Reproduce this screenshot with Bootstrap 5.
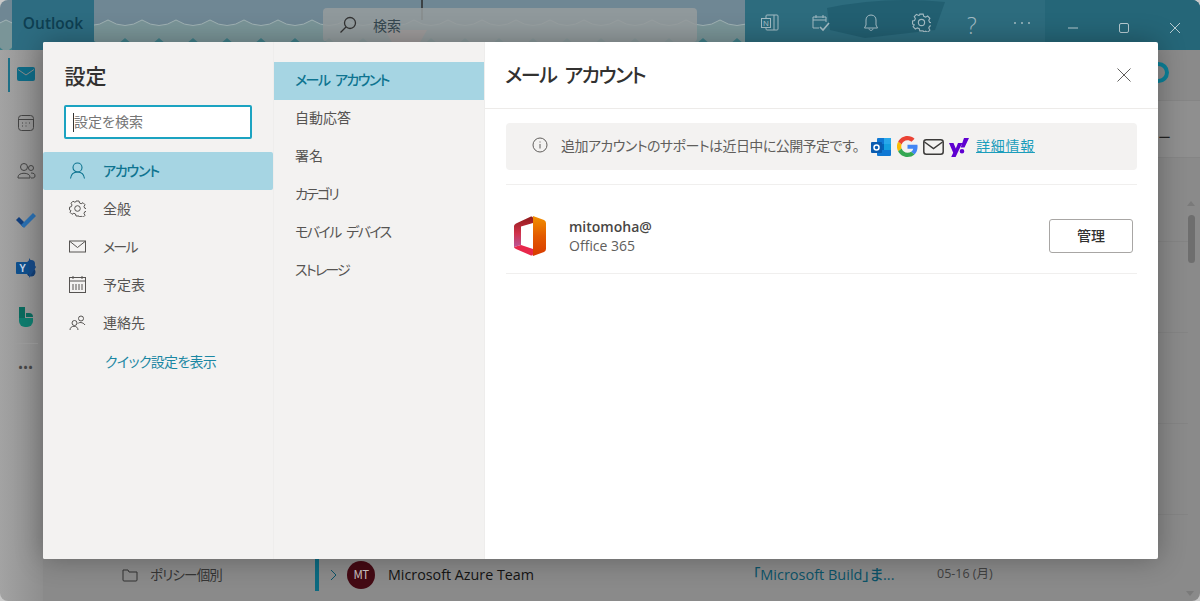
<!DOCTYPE html>
<html lang="ja">
<head>
    <meta charset="UTF-8">
    <meta name="viewport" content="width=device-width, initial-scale=1.0">
    <title>設定</title>
    <link href="https://cdn.jsdelivr.net/npm/bootstrap@5.3.0/dist/css/bootstrap.min.css" rel="stylesheet">
    <style>
        html, body { height: 100%; overflow: hidden; background: #c9c9c9; }
        body { font-family: "Noto Sans CJK JP", "Liberation Sans", sans-serif; font-size: 14px; color: #323130; font-feature-settings: "palt"; }
        .latin { font-family: "Open Sans", "Noto Sans CJK JP", sans-serif; }
        .kana-a { letter-spacing: -1.2px; }
        .kana-b { letter-spacing: -1.8px; }
        .kana-gap { letter-spacing: -1.6px; word-spacing: 4px; }

        /* app behind the dialog */
        .app-shell { height: 601px; border-radius: 8px; overflow: hidden; }
        .app-head { height: 50px; flex: none; background: #6f8794; }
        .head-layer { left: 0; top: 0; }
        .head-right { width: 455px; background: #2d6c7e; }
        .head-icons { padding-top: 13px; }
        .app-brand { width: 82px; margin-left: 12px; padding-bottom: 2px; background: #2d6c81; color: #0e3f52; font-family: "Open Sans", sans-serif; font-size: 15.500px; font-weight: 600; }
        .app-search { width: 374px; height: 34px; margin-top: 8px; margin-left: 229px; background: rgba(150, 156, 157, .85); border-radius: 4px; color: #35474f; font-size: 14px; }
        .head-btn { width: 50.6px; height: 24px; color: #a4bcc4; }
        .head-help { font-family: "Open Sans", sans-serif; font-weight: 300; font-size: 23px; line-height: 24px; }
        .win-btn { width: 51px; color: #b7cbd1; padding-top: 9px; }
        .app-rail { width: 43px; flex: none; padding-left: 9px; background: linear-gradient(90deg, #a3a3a3, #8e8e8e); }
        .rail-item { height: 48.5px; }
        .rail-mark { width: 2px; height: 34px; left: -1px; background: #1f6f86; top: 8px; }
        .rail-sep { width: 24px; height: 1px; background: #9c9c9c; margin: 2px auto 16px; }
        .rail-dots { color: #454545; font-size: 12px; letter-spacing: 1px; }
        .app-main { background: #8a8a8a; }
        .folder-col { width: 272px; height: 35px; margin-top: 507px; padding-left: 79px; gap: 12px; color: #353535; font-size: 13.5px; flex: none; letter-spacing: -.8px; }
        .mail-row { height: 35px; margin-top: 507px; }
        .row-mark { width: 4px; height: 33px; background: #0c6a80; }
        .row-chev { margin: 0 8px 0 10px; }
        .avatar-mt { width: 28px; height: 28px; margin-right: 13px; border-radius: 50%; background: #440a14; color: #cfc4c4; font-size: 11.500px; letter-spacing: -.5px; }
        .row-from { width: 365px; color: #141414; font-size: 14.3px; }
        .row-subj { width: 184px; color: #0c5368; font-size: 14.500px; font-weight: 500; }
        .row-date { color: #414141; font-size: 12.500px; }
        .back-strip { left: 1158px; top: 190px; width: 30px; height: 411px; background: repeating-linear-gradient(180deg, transparent 0 51px, #848484 51px 52px, transparent 52px 91px); }
        .back-band { left: 1158px; top: 100px; width: 42px; height: 58px; border-top: 1px solid #858585; border-bottom: 1px solid #858585; background: #8f8f8f; }
        .back-text { left: 1158px; top: 127px; font-size: 13px; color: #222; }
        .back-ring { left: 1148px; top: 62px; width: 21px; height: 21px; border: 4px solid #0b8199; border-radius: 50%; }
        .back-thumb { left: 1188px; top: 215px; width: 7px; height: 48px; background: #6e6e6e; border-radius: 4px; }
        .arrow-up { left: 1187px; top: 197px; border: 4.5px solid transparent; border-bottom: 5px solid #7a7a7a; }
        .arrow-down { left: 1186px; top: 591px; border: 4.5px solid transparent; border-top: 5px solid #7a7a7a; }

        /* settings dialog */
        .set-dialog { left: 43px; top: 42px; width: 1115px; height: 517px; background: #fff; box-shadow: 0 0 28px rgba(0, 0, 0, .3); border-radius: 2px; }
        .set-nav { width: 231px; flex: none; background: #f3f2f1; border-right: 1px solid #eeedec; }
        .set-title { font-size: 21px; font-weight: 500; line-height: 28px; padding: 19px 0 0 21.5px; color: #323130; }
        .set-search { width: 188px; height: 34px; margin: 16px 0 13px 21px; border: 2px solid #1ba3c1; background: #fff; padding: 0 8px; line-height: 29px; color: #767676; border-radius: 2px; font-size: 14px; }
        .set-search::before { content: ""; position: absolute; left: 7px; top: 6px; width: 1px; height: 19px; background: #333; }
        .nav-line { height: 38px; padding-left: 26px; padding-bottom: 1px; gap: 17px; color: #565452; }
        .nav-line svg { width: 17px; height: 17px; flex: none; }
        .nav-line.is-on { background: #a6d5e3; color: #0e7490; font-weight: 500; border-radius: 2px; }
        .quick-link { color: #1b87a3; padding-left: 62px; height: 40px; padding-bottom: 2px; letter-spacing: -.7px; }
        .set-sub { width: 211px; flex: none; background: #f3f2f1; border-right: 1px solid #eeedec; padding-top: 20px; }
        .sub-line { height: 38px; padding-left: 21px; padding-bottom: 3px; color: #565452; }
        .sub-line.is-on { background: #a6d5e3; color: #0e7490; font-weight: 500; }
        .set-body { min-width: 0; }
        .body-head { height: 67px; padding: 0 27px 0 20px; border-bottom: 1px solid #edebe9; }
        .body-title { font-size: 20px; font-weight: 500; color: #323130; letter-spacing: -1.5px; word-spacing: 5px; }
        .body-pane { padding: 14px 21px 0; }
        .notice-box { height: 47px; background: #f3f2f1; border-radius: 4px; padding-left: 26px; padding-bottom: 3px; color: #605e5c; }
        .notice-text { margin: 0 12px 0 13px; letter-spacing: -.55px; }
        .notice-box a { color: #1b9dbb; letter-spacing: .7px; }
        .brand-icons { gap: 5px; margin-right: 6px; padding-top: 3px; }
        .acct-rule { height: 1px; background: #f0efee; margin-top: 14px; }
        .acct-row { height: 89px; border-bottom: 1px solid #f0efee; padding: 14px 4px 0 8px; }
        .acct-logo { margin-right: 23px; }
        .acct-mail { font-size: 14px; font-weight: 600; color: #484644; line-height: 19px; font-family: "Open Sans", sans-serif; }
        .acct-kind { font-size: 14px; color: #605e5c; line-height: 19px; font-family: "Open Sans", sans-serif; }
        .manage-btn { width: 84px; height: 34px; border: 1px solid #a8a6a4; border-radius: 3px; background: #fff; font-weight: 500; font-size: 14px; color: #323130; padding: 0 0 2px; }
    </style>
</head>
<body>
    <div class="app-shell d-flex flex-column position-relative">
        <div class="app-head d-flex position-relative">
            <svg class="head-layer position-absolute" width="745" height="50" viewBox="0 0 745 50">
                <defs>
                    <pattern id="waveTop" width="34" height="50" patternUnits="userSpaceOnUse" x="6">
                        <path d="M0 20Q17 31 34 20V50H0Z" fill="#7a9598"/>
                        <path d="M0 20Q17 31 34 20" fill="none" stroke="#a0b2b3"/>
                    </pattern>
                    <pattern id="waveLow" width="34" height="50" patternUnits="userSpaceOnUse" x="6">
                        <path d="M3 50 17 38 31 50Z" fill="#3f7f88"/>
                    </pattern>
                </defs>
                <rect width="745" height="50" fill="url(#waveTop)"/>
                <rect width="745" height="50" fill="url(#waveLow)"/>
                <path d="M422 0v20" stroke="#2b2b2b" stroke-width="1.500"/>
                <path d="M385 30h42l-8 14h-26Z" fill="#c9968a"/>
            </svg>
            <div class="app-brand d-flex align-items-center justify-content-center position-relative">Outlook</div>
            <div class="app-search d-flex align-items-center ps-3 gap-3 position-relative">
                <svg width="18" height="18" viewBox="0 0 18 18" fill="none" stroke="#333" stroke-width="1.300"><circle cx="11" cy="7" r="5.500"/><path d="M7 11 1.500 16.500"/></svg>
                <span>検索</span>
            </div>
            <div class="head-right ms-auto position-relative overflow-hidden">
                <svg class="head-layer position-absolute" width="455" height="50" viewBox="0 0 455 50">
                    <path d="M82 8Q140 -4 200 2L190 30 120 38 85 30Z" fill="#225f71"/>
                    <rect x="300" width="155" height="50" fill="#256678"/>
                </svg>
                <div class="head-icons d-flex position-relative">
                    <div class="head-btn d-flex justify-content-center"><svg width="20" height="20" viewBox="0 0 20 20" fill="none" stroke="currentColor"><rect x="6" y="2" width="12" height="15" rx="1"/><path d="M14 2v15"/><rect x="1.500" y="5.500" width="9" height="9" fill="#2b6b7d"/><text x="6" y="13" font-size="8" font-family="Liberation Sans" fill="currentColor" stroke="none" text-anchor="middle">N</text></svg></div>
                    <div class="head-btn d-flex justify-content-center"><svg width="20" height="20" viewBox="0 0 20 20" fill="none" stroke="currentColor"><path d="M8 15H2V4h13v5M2 7h13M5 2v3M12 2v3"/><path d="m9 14 3 3 6-7" stroke-width="1.600"/></svg></div>
                    <div class="head-btn d-flex justify-content-center"><svg width="20" height="20" viewBox="0 0 20 20" fill="none" stroke="currentColor"><path d="M10 2C6.500 2 5 4.500 5 7v5l-1.500 3h13L15 12V7c0-2.500-1.500-5-5-5ZM8 15.500c0 2.500 4 2.500 4 0"/></svg></div>
                    <div class="head-btn d-flex justify-content-center"><svg width="19" height="19" viewBox="0 0 17 17" fill="none" stroke="currentColor"><circle cx="8.500" cy="8.500" r="2.800"/><path d="M7 1h3l.5 2 1.700.7 1.800-1 2 2-1 1.800.7 1.700 1.800.5v2.600l-1.800.5-.7 1.700 1 1.800-2 2-1.800-1-1.700.7L10 16H7l-.5-2-1.700-.7-1.800 1-2-2 1-1.800L1.300 10.300.5 9.800V7.200l1.800-.5L3 5 2 3.200l2-2 1.800 1 1-.4Z"/></svg></div>
                    <div class="head-btn head-help text-center">?</div>
                    <div class="head-btn d-flex justify-content-center"><svg width="20" height="20" viewBox="0 0 20 20" fill="currentColor"><circle cx="3" cy="10" r="1"/><circle cx="10" cy="10" r="1"/><circle cx="17" cy="10" r="1"/></svg></div>
                    <div class="win-btn d-flex justify-content-center"><svg width="12" height="12" viewBox="0 0 12 12" stroke="currentColor"><path d="M1 6h10"/></svg></div>
                    <div class="win-btn d-flex justify-content-center"><svg width="12" height="12" viewBox="0 0 12 12" fill="none" stroke="currentColor"><rect x="1.500" y="1.500" width="9" height="9" rx="1.500"/></svg></div>
                    <div class="win-btn d-flex justify-content-center"><svg width="12" height="12" viewBox="0 0 12 12" stroke="currentColor"><path d="m1 1 10 10M11 1 1 11"/></svg></div>
                </div>
            </div>
        </div>
        <div class="d-flex flex-grow-1">
            <div class="app-rail">
                <div class="rail-item position-relative d-flex align-items-center justify-content-center">
                    <span class="rail-mark position-absolute"></span>
                    <svg width="18" height="14" viewBox="0 0 18 14"><rect width="18" height="14" rx="2" fill="#0f6a85"/><path d="M1 2.500 9 8l8-5.500" stroke="#8a8a8a" fill="none"/></svg>
                </div>
                <div class="rail-item d-flex align-items-center justify-content-center"><svg width="18" height="18" viewBox="0 0 18 18" fill="none" stroke="#444"><rect x="1.500" y="1.500" width="15" height="15" rx="3"/><path d="M1.500 5.500h15M5 9h1M8.500 9h1M12 9h1M5 12h1M8.500 12h1"/></svg></div>
                <div class="rail-item d-flex align-items-center justify-content-center"><svg width="20" height="18" viewBox="0 0 20 18" fill="none" stroke="#444"><circle cx="8" cy="5" r="3.500"/><circle cx="15" cy="6" r="2.500"/><path d="M2 15c0-5 12-5 12 0v1H2ZM15 11c3 0 4 1 4 3s-2 2-4 2"/></svg></div>
                <div class="rail-item d-flex align-items-center justify-content-center"><svg width="22" height="18" viewBox="0 0 22 18"><path d="M1 9l3-3 5 5-1 5Z" fill="#123f7d"/><path d="M6 14 18 2l3 3L9 17Z" fill="#2a6fb0"/></svg></div>
                <div class="rail-item d-flex align-items-center justify-content-center"><svg width="22" height="22" viewBox="0 0 22 22"><circle cx="16" cy="7" r="4" fill="#174a86"/><circle cx="16" cy="15" r="4.500" fill="#123e74"/><path d="M14 1l7 9-7 11Z" fill="#174a86"/><rect x="1" y="5" width="13" height="12" rx="1" fill="#0f4f8c"/><text x="7.500" y="14.500" font-size="10" font-weight="700" fill="#c6d7e8" text-anchor="middle" font-family="Liberation Sans">Y</text></svg></div>
                <div class="rail-item d-flex align-items-center justify-content-center"><svg width="16" height="22" viewBox="0 0 16 22"><path d="M1 1h6v11H1Z" fill="#0b6a5e"/><path d="M1 12h14v3a6 6 0 0 1-6 6H7a6 6 0 0 1-6-6Z" fill="#0f7c6e"/><path d="M8 7h3a4 4 0 0 1 4 4H8Z" fill="#0b6a5e"/></svg></div>
                <div class="rail-sep"></div>
                <div class="text-center lh-1 rail-dots">•••</div>
            </div>
            <div class="app-main flex-grow-1 d-flex">
                <div class="folder-col d-flex align-items-center">
                    <svg width="16" height="14" viewBox="0 0 16 14" fill="none" stroke="#333"><path d="M1 3V2h5l1 2h8v8a1 1 0 0 1-1 1H2a1 1 0 0 1-1-1Z"/></svg>
                    <span class="text-nowrap">ポリシー個別</span>
                </div>
                <div class="mail-row d-flex align-items-center">
                    <span class="row-mark"></span>
                    <svg class="row-chev" width="10" height="14" viewBox="0 0 10 14" fill="none" stroke="#0c5368"><path d="m2 2 5 5-5 5"/></svg>
                    <span class="avatar-mt d-flex align-items-center justify-content-center">MT</span>
                    <span class="row-from latin">Microsoft Azure Team</span>
                    <span class="row-subj latin text-nowrap">「Microsoft Build」ま...</span>
                    <span class="row-date latin text-nowrap">05-16 (月)</span>
                </div>
            </div>
        </div>
        <span class="back-band position-absolute"></span>
        <span class="back-strip position-absolute"></span>
        <span class="back-ring position-absolute"></span>
        <span class="back-text position-absolute">ー</span>
        <span class="arrow-up position-absolute"></span>
        <span class="back-thumb position-absolute"></span>
        <span class="arrow-down position-absolute"></span>

        <div class="set-dialog position-absolute d-flex overflow-hidden">
            <div class="set-nav">
                <div class="set-title">設定</div>
                <div class="set-search position-relative">設定を検索</div>
                <div class="nav-line is-on d-flex align-items-center">
                    <svg viewBox="0 0 17 17" fill="none" stroke="currentColor" stroke-width="1.100"><circle cx="8.500" cy="5.500" r="4.500"/><path d="M1.500 16.500c.5-4 3-6.500 7-6.500s6.500 2.500 7 6.500"/></svg>
                    <span class="kana-a">アカウント</span>
                </div>
                <div class="nav-line d-flex align-items-center">
                    <svg viewBox="0 0 17 17" fill="none" stroke="currentColor"><circle cx="8.500" cy="8.500" r="2.800"/><path d="M7 1h3l.5 2 1.700.7 1.800-1 2 2-1 1.800.7 1.700 1.800.5v2.600l-1.800.5-.7 1.700 1 1.800-2 2-1.800-1-1.700.7L10 16H7l-.5-2-1.700-.7-1.800 1-2-2 1-1.800L1.300 10.300.5 9.800V7.200l1.800-.5L3 5 2 3.200l2-2 1.800 1 1-.4Z"/></svg>
                    <span>全般</span>
                </div>
                <div class="nav-line d-flex align-items-center">
                    <svg viewBox="0 0 17 17" fill="none" stroke="currentColor"><rect x=".5" y="3" width="16" height="11"/><path d="m1 3.500 7.500 6 7.500-6"/></svg>
                    <span class="kana-b">メール</span>
                </div>
                <div class="nav-line d-flex align-items-center">
                    <svg viewBox="0 0 17 17" fill="none" stroke="currentColor"><rect x=".5" y="1.500" width="16" height="15"/><path d="M.5 5h16M4 0v3M13 0v3M4 8v6M7 8v6M10 8v6M13 8v6"/></svg>
                    <span>予定表</span>
                </div>
                <div class="nav-line d-flex align-items-center">
                    <svg viewBox="0 0 17 17" fill="none" stroke="currentColor"><circle cx="5.500" cy="9" r="2.500"/><circle cx="12" cy="4.500" r="2.500"/><path d="M1 16c0-5 8-5 8 0M9 9.500c.8-1.500 5-1.500 7 1.500"/></svg>
                    <span>連絡先</span>
                </div>
                <div class="quick-link d-flex align-items-center">クイック設定を表示</div>
            </div>
            <div class="set-sub">
                <div class="sub-line is-on d-flex align-items-center"><span class="kana-gap">メール アカウント</span></div>
                <div class="sub-line d-flex align-items-center">自動応答</div>
                <div class="sub-line d-flex align-items-center">署名</div>
                <div class="sub-line d-flex align-items-center"><span class="kana-b">カテゴリ</span></div>
                <div class="sub-line d-flex align-items-center"><span class="kana-gap">モバイル デバイス</span></div>
                <div class="sub-line d-flex align-items-center"><span class="kana-b">ストレージ</span></div>
            </div>
            <div class="set-body flex-grow-1">
                <div class="body-head d-flex align-items-center justify-content-between">
                    <div class="body-title">メール アカウント</div>
                    <svg width="14" height="14" viewBox="0 0 14 14" stroke="#605e5c"><path d="m.5.500 13 13M13.500.500l-13 13"/></svg>
                </div>
                <div class="body-pane">
                    <div class="notice-box d-flex align-items-center">
                        <svg width="16" height="16" viewBox="0 0 16 16" fill="none" stroke="#605e5c"><circle cx="8" cy="8" r="7"/><path d="M8 7v4.500M8 4.500v1"/></svg>
                        <span class="notice-text">追加アカウントのサポートは近日中に公開予定です。</span>
                        <span class="brand-icons d-flex align-items-center">
                            <svg width="21" height="20" viewBox="0 0 21 20"><rect x="6" y="1" width="14" height="18" rx="1" fill="#0f78d4"/><rect x="13" y="1" width="7" height="6" fill="#28a8ea"/><rect x="6" y="7" width="7" height="6" fill="#0364b8"/><rect x="13" y="7" width="7" height="6" fill="#14a0e0"/><rect y="5" width="11" height="11" rx="1" fill="#0a5cb0"/><circle cx="5.500" cy="10.500" r="2.500" fill="none" stroke="#fff" stroke-width="1.500"/></svg>
                            <svg width="21" height="21" viewBox="0 0 48 48"><path fill="#ea4335" d="M24 9.500c3.500 0 6.700 1.200 9.200 3.600l6.900-6.900C35.900 2.400 30.500 0 24 0 14.600 0 6.500 5.400 2.600 13.200l8 6.200C12.500 13.600 17.800 9.500 24 9.500Z"/><path fill="#4285f4" d="M47 24.500c0-1.600-.1-3.100-.4-4.500H24v9h13c-.6 3-2.300 5.500-4.800 7.200l7.700 6C44.400 38 47 31.800 47 24.500Z"/><path fill="#fbbc05" d="M10.500 28.600A14.500 14.500 0 0 1 10.500 19.400l-8-6.200a24 24 0 0 0 0 21.600Z"/><path fill="#34a853" d="M24 48c6.500 0 11.900-2.100 15.900-5.800l-7.700-6c-2.200 1.500-4.900 2.300-8.200 2.300-6.200 0-11.500-4.100-13.400-9.900l-8 6.200C6.500 42.600 14.600 48 24 48Z"/></svg>
                            <svg width="21" height="16" viewBox="0 0 21 16" fill="none" stroke="#3b3a39" stroke-width="1.500"><rect x=".8" y=".8" width="19.400" height="14.400" rx="2.500"/><path d="m1.500 3 9 6.500 9-6.500"/></svg>
                            <svg width="21" height="20" viewBox="0 0 21 20" fill="#5f01d1"><path d="M0 6h4.500l2.300 5.500L9 6h4.300l-6.700 14H2.200l2-4.300ZM15 1h5l-4.500 9.500h-3.800ZM13 12a2.300 2.300 0 1 1 0 4.600 2.300 2.300 0 0 1 0-4.600Z"/></svg>
                        </span>
                        <a href="#">詳細情報</a>
                    </div>
                    <div class="acct-rule"></div>
                    <div class="acct-row d-flex align-items-center">
                        <svg class="acct-logo" width="32" height="40" viewBox="0 0 32 40">
                            <defs>
                                <linearGradient id="offA" x1="0" y1="0" x2="0" y2="1"><stop offset="0" stop-color="#f29100"/><stop offset=".5" stop-color="#e35a00"/><stop offset="1" stop-color="#d83b01"/></linearGradient>
                                <linearGradient id="offB" x1="0" y1="0" x2="0" y2="1"><stop offset="0" stop-color="#8e1a1a"/><stop offset=".55" stop-color="#d1324a"/><stop offset="1" stop-color="#b9569a"/></linearGradient>
                            </defs>
                            <path fill="url(#offB)" d="M0 10Q0 8.500 2 7.500L17 .5Q19 0 19 2V7L7 10.500V29L0 31Z"/>
                            <path fill="url(#offA)" d="M19 0 30 4Q32 5 32 7V33Q32 35 30 36L19 40Z"/>
                            <path fill="#e8274b" d="M0 31 7 29 19 33V38Q19 40 17 39.500L2 33Q0 32 0 31Z"/>
                        </svg>
                        <div class="flex-grow-1">
                            <div class="acct-mail">mitomoha@</div>
                            <div class="acct-kind">Office 365</div>
                        </div>
                        <button class="manage-btn" type="button">管理</button>
                    </div>
                </div>
            </div>
        </div>
    </div>
    <script src="https://cdn.jsdelivr.net/npm/bootstrap@5.3.0/dist/js/bootstrap.bundle.min.js"></script>
</body>
</html>
